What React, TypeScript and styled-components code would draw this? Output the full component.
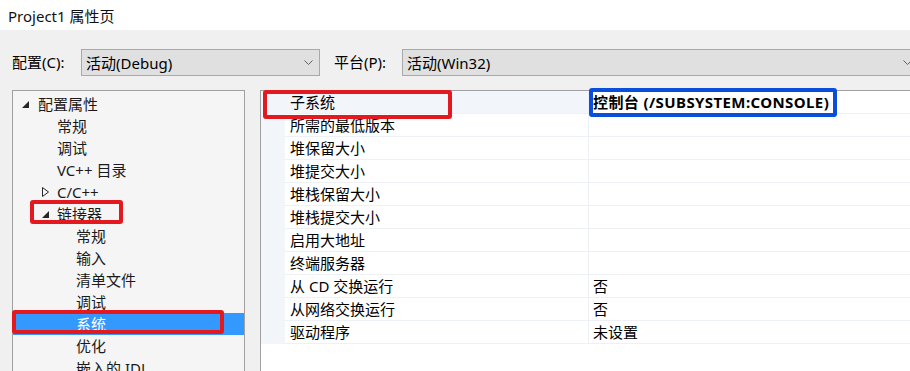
import React from 'react';
import styled, { createGlobalStyle } from 'styled-components';

const GlobalStyle = createGlobalStyle`
  html, body {
    margin: 0;
    padding: 0;
    overflow: hidden;
    background: #f0f0f0;
  }
`;

const FONT = `"Segoe UI", "Noto Sans", "Noto Sans CJK SC", sans-serif`;

const Page = styled.div`
  position: relative;
  width: 930px;
  height: 371px;
  overflow: hidden;
  font-family: ${FONT};
  font-size: 15px;
  color: #000;
  background: #f0f0f0;
`;

const TitleBar = styled.div`
  height: 30px;
  background: #ffffff;
  display: flex;
  align-items: center;
  padding-left: 8px;
  font-size: 15px;
  color: #111;
`;

const Body = styled.div`
  padding: 19px 0 0 12px;
`;

const Toolbar = styled.div`
  display: flex;
  align-items: center;
  height: 27px;
`;

const Label = styled.span<{ $width: number; $offset?: number }>`
  width: ${p => p.$width}px;
  margin-left: ${p => p.$offset ?? 0}px;
  line-height: 27px;
  white-space: nowrap;
`;

const Combo = styled.div<{ $width: number }>`
  box-sizing: border-box;
  width: ${p => p.$width}px;
  height: 27px;
  flex-shrink: 0;
  background: #e0e0e0;
  border: 1px solid #a9a9a9;
  display: flex;
  align-items: center;
  justify-content: space-between;
  padding: 0 6px 0 4px;
`;

const Chevron = () => (
  <svg width="9" height="5" viewBox="0 0 9 5">
    <polyline points="0.5,0.5 4.5,4.5 8.5,0.5" fill="none" stroke="#606060" strokeWidth="1" />
  </svg>
);

const Content = styled.div`
  display: flex;
  margin-top: 14px;
  height: 300px;
`;

const Tree = styled.div`
  box-sizing: border-box;
  width: 233px;
  height: 100%;
  flex-shrink: 0;
  border: 1px solid #a0a0a0;
  background: #f5f5f5;
  padding-top: 2px;
`;

const TreeRow = styled.div<{ $level: number; $selected?: boolean }>`
  position: relative;
  height: 22px;
  line-height: 22px;
  padding-left: ${p => 25 + p.$level * 19}px;
  background: ${p => (p.$selected ? '#3399ff' : 'transparent')};
  color: ${p => (p.$selected ? '#ffffff' : '#1a1a1a')};
  white-space: nowrap;
`;

const Expander = styled.span<{ $level: number }>`
  position: absolute;
  left: ${p => 9 + p.$level * 20}px;
  top: 0;
  height: 22px;
  display: flex;
  align-items: center;
`;

const Expanded = () => (
  <svg width="7" height="7" viewBox="0 0 7 7">
    <polygon points="7,0 7,7 0,7" fill="#262626" />
  </svg>
);

const Collapsed = () => (
  <svg width="7" height="10" viewBox="0 0 7 10">
    <polygon points="0.5,0.5 6.5,5 0.5,9.5" fill="none" stroke="#262626" strokeWidth="1" />
  </svg>
);

const Grid = styled.div`
  flex: 1;
  margin-left: 15px;
  height: 100%;
  border-left: 1px solid #a0a0a0;
  border-top: 1px solid #a0a0a0;
  background: #ffffff;
`;

const PropRow = styled.div`
  display: grid;
  grid-template-columns: 24px 304px 1fr;
  height: 23px;
`;

const Gutter = styled.div`
  background: #f2f5fa;
`;

const NameCell = styled.div<{ $selected?: boolean }>`
  box-sizing: border-box;
  padding-left: 5px;
  line-height: 22px;
  border-bottom: 1px solid #edf1f7;
  border-right: 1px solid #edf1f7;
  background: ${p => (p.$selected ? '#f2f5fa' : '#ffffff')};
  white-space: nowrap;
`;

const ValueCell = styled.div<{ $bold?: boolean }>`
  box-sizing: border-box;
  padding-left: 4px;
  line-height: 22px;
  border-bottom: 1px solid #edf1f7;
  font-weight: ${p => (p.$bold ? 700 : 400)};
  letter-spacing: ${p => (p.$bold ? '0.4px' : 'normal')};
  white-space: nowrap;
`;

const Mark = styled.div<{ $color: string; $x: number; $y: number; $w: number; $h: number }>`
  position: absolute;
  box-sizing: border-box;
  left: ${p => p.$x}px;
  top: ${p => p.$y}px;
  width: ${p => p.$w}px;
  height: ${p => p.$h}px;
  border: 4px solid ${p => p.$color};
  border-radius: 3px;
  pointer-events: none;
`;

type TreeItem = { label: string; level: number; expander?: 'open' | 'closed'; selected?: boolean };

const treeItems: TreeItem[] = [
  { label: '配置属性', level: 0, expander: 'open' },
  { label: '常规', level: 1 },
  { label: '调试', level: 1 },
  { label: 'VC++ 目录', level: 1 },
  { label: 'C/C++', level: 1, expander: 'closed' },
  { label: '链接器', level: 1, expander: 'open' },
  { label: '常规', level: 2 },
  { label: '输入', level: 2 },
  { label: '清单文件', level: 2 },
  { label: '调试', level: 2 },
  { label: '系统', level: 2, selected: true },
  { label: '优化', level: 2 },
  { label: '嵌入的 IDL', level: 2 },
];

const props: [string, string][] = [
  ['子系统', '控制台 (/SUBSYSTEM:CONSOLE)'],
  ['所需的最低版本', ''],
  ['堆保留大小', ''],
  ['堆提交大小', ''],
  ['堆栈保留大小', ''],
  ['堆栈提交大小', ''],
  ['启用大地址', ''],
  ['终端服务器', ''],
  ['从 CD 交换运行', '否'],
  ['从网络交换运行', '否'],
  ['驱动程序', '未设置'],
];

export default function App() {
  return (
    <Page>
      <GlobalStyle />
      <TitleBar>Project1 属性页</TitleBar>
      <Body>
        <Toolbar>
          <Label $width={69}>配置(C):</Label>
          <Combo $width={239}>
            <span>活动(Debug)</span>
            <Chevron />
          </Combo>
          <Label $width={68} $offset={14}>平台(P):</Label>
          <Combo $width={517}>
            <span>活动(Win32)</span>
            <Chevron />
          </Combo>
        </Toolbar>
        <Content>
          <Tree>
            {treeItems.map((item, i) => (
              <TreeRow key={i} $level={item.level} $selected={item.selected}>
                {item.expander && (
                  <Expander $level={item.level}>
                    {item.expander === 'open' ? <Expanded /> : <Collapsed />}
                  </Expander>
                )}
                {item.label}
              </TreeRow>
            ))}
          </Tree>
          <Grid>
            {props.map(([name, value], i) => (
              <PropRow key={i}>
                <Gutter />
                <NameCell $selected={i === 0}>{name}</NameCell>
                <ValueCell $bold={i === 0}>{value}</ValueCell>
              </PropRow>
            ))}
          </Grid>
        </Content>
      </Body>
      <Mark $color="#e3191f" $x={30} $y={200} $w={93} $h={24} />
      <Mark $color="#e3191f" $x={12} $y={310} $w={212} $h={24} />
      <Mark $color="#e3191f" $x={263} $y={90} $w={189} $h={29} />
      <Mark $color="#0a4fdc" $x={589} $y={88} $w={248} $h={29} />
    </Page>
  );
}
